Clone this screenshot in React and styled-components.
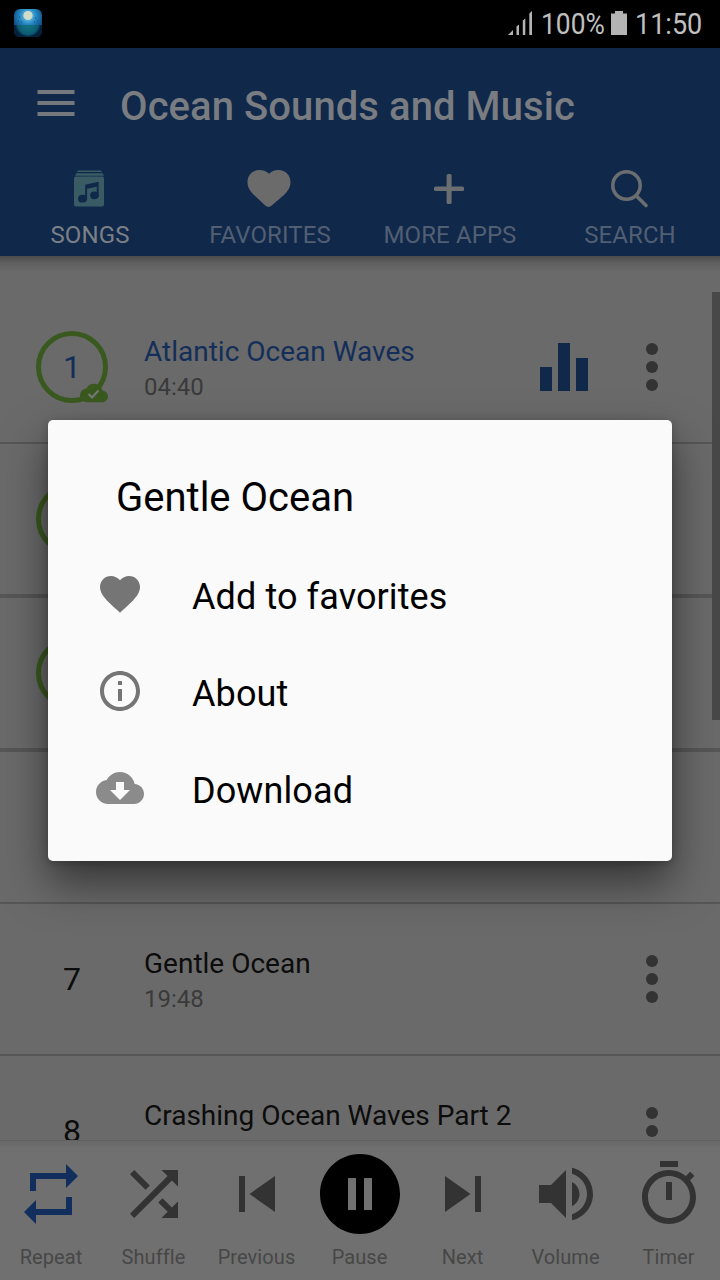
import React from "react";
import styled, { createGlobalStyle } from "styled-components";

const GlobalStyle = createGlobalStyle`
  * {
    box-sizing: border-box;
  }
  body {
    margin: 0;
    background: #6a6a6a;
    font-family: Roboto, "Liberation Sans", sans-serif;
  }
  svg {
    display: block;
    flex: none;
  }
`;

const Screen = styled.div`
  position: relative;
  display: flex;
  flex-direction: column;
  width: 720px;
  height: 1280px;
  overflow: hidden;
`;

const StatusBar = styled.div`
  display: flex;
  align-items: center;
  height: 48px;
  padding: 0 18px 2px 14px;
  background: #000;
  color: #c0c0c0;
`;

const StatusIcons = styled.div`
  display: flex;
  align-items: center;
  margin-left: auto;
`;

const StatusText = styled.span`
  width: ${(props) => props.$width}px;
  margin-left: ${(props) => props.$gap}px;
  padding-top: 2px;
  font-size: 30px;
  line-height: 46px;
  white-space: nowrap;
  transform: scaleX(${(props) => props.$squeeze});
  transform-origin: left;
`;

const Header = styled.header`
  display: flex;
  flex-direction: column;
  height: 208px;
  background: #10284a;
`;

const TitleRow = styled.div`
  display: flex;
  align-items: center;
  height: 110px;
  padding: 8px 37px 0;
  svg {
    margin-bottom: 8px;
  }
`;

const Title = styled.h1`
  margin: 0 0 0 45px;
  color: #797c81;
  font-size: 40px;
  font-weight: 500;
  line-height: 48px;
  letter-spacing: 0.07px;
`;

const Tabs = styled.nav`
  display: grid;
  grid-template-columns: repeat(4, 1fr);
`;

const Tab = styled.div`
  display: flex;
  flex-direction: column;
  align-items: center;
  padding-top: 12px;
  color: ${(props) => (props.$active ? "#7c8086" : "#525f73")};
  font-size: 24px;
  line-height: 30px;
  letter-spacing: 0.1px;
  svg {
    margin: 0 2px 12px 0;
  }
`;

const List = styled.main`
  position: relative;
  height: 884px;
  padding-top: 36px;
  overflow: hidden;
  background: linear-gradient(#4b4b4b, #5f5f5f 7px, #6a6a6a 16px);
`;

const Row = styled.div`
  display: flex;
  box-sizing: content-box;
  height: 150px;
  padding: 0 32px 0 36px;
  border-bottom: ${(props) => props.$line || 2}px solid #565656;
`;

const Badge = styled.div`
  position: relative;
  width: 72px;
  height: 72px;
  margin-top: 39px;
  border: ${(props) => (props.$ring ? "5px solid #3a591f" : "0")};
  border-radius: 50%;
  color: ${(props) => (props.$active ? "#142e5a" : "#0c0c0c")};
  font-size: 32px;
  line-height: ${(props) => (props.$ring ? 62 : 72)}px;
  text-align: center;
  svg {
    position: absolute;
    right: -5px;
    bottom: -9px;
  }
`;

const SongInfo = styled.div`
  flex: 1;
  padding: 43px 0 0 36px;
`;

const SongTitle = styled.div`
  color: ${(props) => (props.$active ? "#142e5a" : "#0c0c0c")};
  font-size: 28px;
  line-height: 34px;
`;

const Duration = styled.div`
  color: #3a3a3a;
  font-size: 24px;
  line-height: 36px;
`;

const Equalizer = styled.svg`
  margin: 51px 28px 0 0;
`;

const Dots = styled.svg`
  margin-top: 51px;
`;

const ScrollThumb = styled.div`
  position: absolute;
  top: 36px;
  right: 0;
  width: 8px;
  height: 428px;
  background: #484848;
`;

const Player = styled.footer`
  display: grid;
  grid-template-columns: 102px repeat(6, 103px);
  height: 140px;
  border-top: 1px solid #616161;
  background: linear-gradient(#696969, #6c6c6c 5px, #707070 6px);
`;

const Control = styled.div`
  display: flex;
  flex-direction: column;
  align-items: center;
  height: 139px;
  padding-top: ${(props) => (props.$big ? 5 : 17)}px;
  color: ${(props) => props.$color || "#333"};
  svg {
    margin-bottom: ${(props) => (props.$big ? 3 : 15)}px;
  }
`;

const ControlLabel = styled.span`
  color: #474747;
  font-size: 20px;
  line-height: 24px;
  letter-spacing: 0.08px;
`;

const Dialog = styled.div`
  position: absolute;
  top: 420px;
  left: 48px;
  width: 624px;
  height: 441px;
  padding: 54px 48px 0;
  border-radius: 5px;
  background: #fafafa;
  box-shadow: 0 22px 44px rgba(0, 0, 0, 0.5), 0 2px 10px rgba(0, 0, 0, 0.22);
`;

const DialogTitle = styled.h2`
  margin: 0 0 24px 20px;
  color: #000;
  font-size: 40px;
  font-weight: 400;
  line-height: 48px;
`;

const Option = styled.div`
  display: flex;
  height: 97px;
  padding-top: 24px;
  color: ${(props) => props.$color || "#757575"};
`;

const OptionText = styled.span`
  margin: 4px 0 0 48px;
  color: #000;
  font-size: 36px;
  line-height: 46px;
  letter-spacing: 0.1px;
`;

const paths = {
  repeat: "M7 7h10v3l4-4-4-4v3H5v6h2V7zm10 10H7v-3l-4 4 4 4v-3h12v-6h-2v4z",
  shuffle:
    "M10.59 9.17L5.41 4 4 5.41l5.17 5.17 1.42-1.41zM14.5 4l2.04 2.04L4 18.59 5.41 20 17.96 7.46 20 9.5V4h-5.5zm.33 9.41l-1.41 1.41 3.13 3.13L14.5 20H20v-5.5l-2.04 2.04-3.13-3.13z",
  previous: "M6 6h2v12H6zm3.5 6l8.5 6V6z",
  pause:
    "M12 2C6.48 2 2 6.48 2 12s4.48 10 10 10 10-4.48 10-10S17.52 2 12 2zm-1 14H9V8h2v8zm4 0h-2V8h2v8z",
  next: "M6 18l8.5-6L6 6v12zM16 6v12h2V6h-2z",
  volume:
    "M3 9v6h4l5 5V4L7 9H3zm13.5 3c0-1.77-1.02-3.29-2.5-4.03v8.05c1.48-.73 2.5-2.25 2.5-4.02zM14 3.23v2.06c2.89.86 5 3.54 5 6.71s-2.11 5.85-5 6.71v2.06c4.01-.91 7-4.49 7-8.77s-2.99-7.86-7-8.77z",
  timer:
    "M15 1H9v2h6V1zm-4 13h2V8h-2v6zm8.03-6.61l1.42-1.42c-.43-.51-.9-.99-1.41-1.41l-1.42 1.42C16.07 4.74 14.12 4 12 4c-4.97 0-9 4.03-9 9s4.02 9 9 9 9-4.03 9-9c0-2.12-.74-4.07-1.97-5.61zM12 20c-3.87 0-7-3.13-7-7s3.13-7 7-7 7 3.13 7 7-3.13 7-7 7z",
  heart:
    "M12 21.35l-1.45-1.32C5.4 15.36 2 12.28 2 8.5 2 5.42 4.42 3 7.5 3c1.74 0 3.41.81 4.5 2.09C13.09 3.81 14.76 3 16.5 3 19.58 3 22 5.42 22 8.5c0 3.78-3.4 6.86-8.55 11.54L12 21.35z",
  info: "M11 17h2v-6h-2v6zm1-15C6.48 2 2 6.48 2 12s4.48 10 10 10 10-4.48 10-10S17.52 2 12 2zm0 18c-4.41 0-8-3.59-8-8s3.59-8 8-8 8 3.59 8 8-3.59 8-8 8zM11 9h2V7h-2v2z",
  download:
    "M19.35 10.04C18.67 6.59 15.64 4 12 4 9.11 4 6.6 5.64 5.35 8.04 2.34 8.36 0 10.91 0 14c0 3.31 2.69 6 6 6h13c2.76 0 5-2.24 5-5 0-2.64-2.05-4.78-4.65-4.96zM17 13l-5 5-5-5h3V9h4v4h3z",
};

function Icon({ name, size }) {
  return (
    <svg width={size} height={size} viewBox="0 0 24 24" fill="currentColor">
      <path d={paths[name]} />
    </svg>
  );
}

function AppIcon() {
  return (
    <svg width="28" height="28" viewBox="0 0 28 28">
      <defs>
        <radialGradient id="sky" cx="14" cy="7" r="15" gradientUnits="userSpaceOnUse">
          <stop offset="0.15" stopColor="#6fc0e0" />
          <stop offset="0.55" stopColor="#2488c4" />
          <stop offset="1" stopColor="#0f5288" />
        </radialGradient>
        <radialGradient id="sea" cx="14" cy="15" r="13" gradientUnits="userSpaceOnUse">
          <stop offset="0.3" stopColor="#12707e" />
          <stop offset="0.8" stopColor="#0b5a74" />
          <stop offset="1" stopColor="#041f3a" />
        </radialGradient>
      </defs>
      <rect width="28" height="28" rx="6" fill="url(#sky)" />
      <path d="M0 16h28v6a6 6 0 0 1-6 6H6a6 6 0 0 1-6-6z" fill="url(#sea)" />
      <circle cx="14" cy="6.5" r="4.6" fill="#cfdcc8" />
      <path d="M5 8h1M7 13h1M21 9h1M23 12h1M20 13h1M4 12h1" stroke="#0f4c70" />
    </svg>
  );
}

function SignalIcon() {
  return (
    <svg width="25" height="24" viewBox="0 0 25 24" fill="#b4b4b4">
      <path d="M0 24l5-5v5zM8.5 15.5l2.5-2v10.5H8.5zM14.8 9.500l2.500-2V24h-2.500zM21.300 2.500L24 0v24h-2.700z" />
    </svg>
  );
}

function BatteryIcon() {
  return (
    <svg width="16" height="24" viewBox="0 0 16 24" fill="#b4b4b4">
      <path d="M4 0h8v2.500h4V24H0V2.500h4z" />
    </svg>
  );
}

function MenuIcon() {
  return (
    <svg width="38" height="26" viewBox="0 0 38 26" fill="#75787d">
      <path d="M.5 0h37v4H.5zM.5 11h37v4H.5zM.5 22h37v4H.5z" />
    </svg>
  );
}

function SongsIcon() {
  return (
    <svg width="30" height="38" viewBox="0 0 31 38" overflow="visible">
      <path d="M4 0h24l1 1.500H3zM2.500 2.700h27l1.500 2.500H1z" fill="#395b64" />
      <rect y="6" width="31" height="31" rx="2" fill="#395b64" />
      <path d="M11.500 14.500l14-3v16h-2V16.800l-10 2V31h-2z" fill="#10284a" />
      <ellipse cx="8.700" cy="29" rx="4.500" ry="4" fill="#10284a" />
      <ellipse cx="21" cy="25.500" rx="4.300" ry="4" fill="#10284a" />
    </svg>
  );
}

function FavoritesIcon() {
  return (
    <svg width="44" height="38" viewBox="0 0 44 38" fill="#6b6b6b">
      <path d="M22 3.800C19 .8 16 0 12.500 0 5.500 0 .5 5.200.5 12c0 5.500 2.500 9 6.500 13l11 10.300q3.500 3.200 7 0L37 25c4-4 6.500-7.500 6.500-13 0-6.800-5-12-12-12-3.500 0-6.500.8-9.500 3.800z" />
    </svg>
  );
}

function PlusIcon() {
  return (
    <svg width="30" height="38" viewBox="0 0 30 38" fill="#6b6e70">
      <rect x="12.600" y="4" width="5" height="30" rx="1.500" />
      <rect y="16.500" width="30" height="4.500" rx="1.500" />
    </svg>
  );
}

function SearchIcon() {
  return (
    <svg width="36" height="38" viewBox="0 0 36 38" fill="none" stroke="#6b6e70" overflow="visible">
      <circle cx="15.500" cy="15.500" r="13.700" strokeWidth="3.600" />
      <path d="M25.500 26l9.500 9.500" strokeWidth="3.600" strokeLinecap="round" />
    </svg>
  );
}

function CloudCheck() {
  return (
    <svg width="28" height="28" viewBox="0 0 24 24">
      <path
        d="M19.350 10.040C18.670 6.590 15.640 4 12 4 9.110 4 6.600 5.640 5.350 8.040 2.340 8.360 0 10.910 0 14c0 3.310 2.690 6 6 6h13c2.760 0 5-2.240 5-5 0-2.640-2.050-4.780-4.650-4.960z"
        fill="#3a591f"
      />
      <path d="M7.300 12.800l3 3 5.600-6" fill="none" stroke="#777" strokeWidth="1.800" />
    </svg>
  );
}

function DotsIcon() {
  return (
    <Dots width="72" height="60" viewBox="-36 0 72 60" fill="#333">
      <circle cx="0" cy="6" r="6" />
      <circle cx="0" cy="24" r="6" />
      <circle cx="0" cy="42" r="6" />
    </Dots>
  );
}

const songs = [
  { number: 1, title: "Atlantic Ocean Waves", time: "04:40", ring: true, active: true },
  { ring: true, line: 4 },
  { ring: true, line: 4 },
  {},
  { number: 7, title: "Gentle Ocean", time: "19:48" },
  { number: 8, title: "Crashing Ocean Waves Part 2" },
];

function Song({ song }) {
  return (
    <Row $line={song.line}>
      <Badge $ring={song.ring} $active={song.active}>
        {song.number}
        {song.active && <CloudCheck />}
      </Badge>
      <SongInfo>
        <SongTitle $active={song.active}>{song.title}</SongTitle>
        <Duration>{song.time}</Duration>
      </SongInfo>
      {song.active && (
        <Equalizer width="48" height="48" viewBox="0 0 48 48" fill="#10284a">
          <path d="M0 24h12v24H0zM18 0h12v48H18zM36 15h12v33H36z" />
        </Equalizer>
      )}
      {song.title && <DotsIcon />}
    </Row>
  );
}

const controls = [
  { icon: "repeat", label: "Repeat", color: "#122e5c" },
  { icon: "shuffle", label: "Shuffle" },
  { icon: "previous", label: "Previous" },
  { icon: "pause", label: "Pause", color: "#000", big: true },
  { icon: "next", label: "Next" },
  { icon: "volume", label: "Volume" },
  { icon: "timer", label: "Timer" },
];

export default function App() {
  return (
    <Screen>
      <GlobalStyle />
      <StatusBar>
        <AppIcon />
        <StatusIcons>
          <SignalIcon />
          <StatusText $width={70} $gap={8} $squeeze={0.88}>
            100%
          </StatusText>
          <BatteryIcon />
          <StatusText $width={67} $gap={8} $squeeze={0.9}>
            11:50
          </StatusText>
        </StatusIcons>
      </StatusBar>
      <Header>
        <TitleRow>
          <MenuIcon />
          <Title>Ocean Sounds and Music</Title>
        </TitleRow>
        <Tabs>
          <Tab $active>
            <SongsIcon />
            SONGS
          </Tab>
          <Tab>
            <FavoritesIcon />
            FAVORITES
          </Tab>
          <Tab>
            <PlusIcon />
            MORE APPS
          </Tab>
          <Tab>
            <SearchIcon />
            SEARCH
          </Tab>
        </Tabs>
      </Header>
      <List>
        {songs.map((song, i) => (
          <Song key={i} song={song} />
        ))}
        <ScrollThumb />
      </List>
      <Player>
        {controls.map((c) => (
          <Control key={c.icon} $color={c.color} $big={c.big}>
            <Icon name={c.icon} size={c.big ? 96 : 72} />
            <ControlLabel>{c.label}</ControlLabel>
          </Control>
        ))}
      </Player>
      <Dialog>
        <DialogTitle>Gentle Ocean</DialogTitle>
        <Option>
          <Icon name="heart" size={48} />
          <OptionText>Add to favorites</OptionText>
        </Option>
        <Option>
          <Icon name="info" size={48} />
          <OptionText>About</OptionText>
        </Option>
        <Option $color="#8b8b8b">
          <Icon name="download" size={48} />
          <OptionText>Download</OptionText>
        </Option>
      </Dialog>
    </Screen>
  );
}
